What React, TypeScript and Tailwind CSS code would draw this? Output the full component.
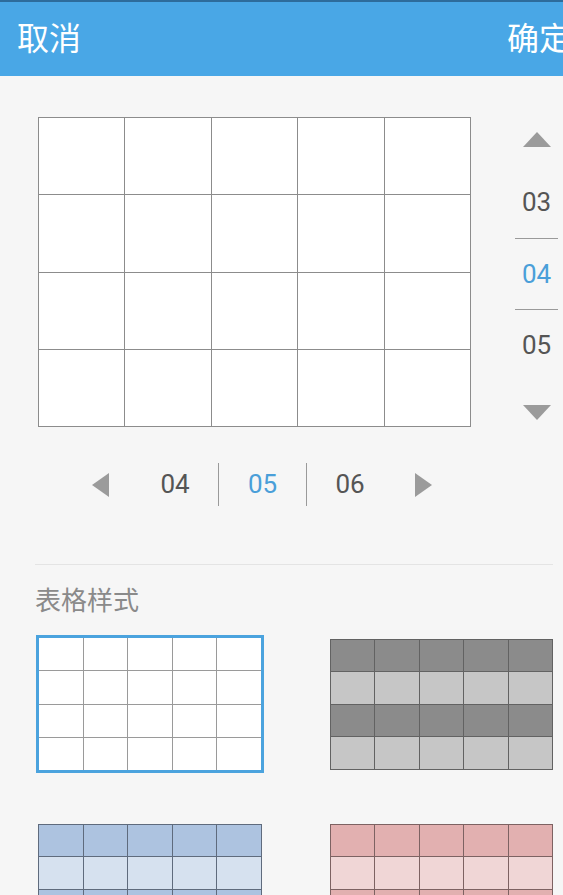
import React from "react";

const font = { fontFamily: 'Roboto, "Noto Sans CJK SC", sans-serif' };

function MiniGrid({
  lineClass,
  rowClasses,
  sizeClass,
  padded = true,
}: {
  lineClass: string;
  rowClasses: string[];
  sizeClass: string;
  padded?: boolean;
}) {
  const cells: React.ReactNode[] = [];
  rowClasses.forEach((rc, r) => {
    for (let c = 0; c < 5; c++) {
      cells.push(<div key={`${r}-${c}`} className={rc} />);
    }
  });
  return (
    <div
      className={`grid grid-cols-5 grid-rows-4 gap-px ${padded ? "p-px" : ""} ${lineClass} ${sizeClass}`}
    >
      {cells}
    </div>
  );
}

export default function App() {
  return (
    <div
      className="w-[563px] h-[895px] overflow-hidden bg-[#f6f6f6]"
      style={font}
    >
      <div className="w-[588px]">
        {/* Header */}
        <div className="h-[76px] bg-[#49a7e6] border-t-2 border-[#2d6c9c] flex items-center justify-between px-[17px] text-white text-[32px] leading-none">
          <span>取消</span>
          <span>确定</span>
        </div>

        {/* Main grid + vertical picker */}
        <div className="flex items-start pt-[41px] pl-[38px]">
          <MiniGrid
            lineClass="bg-[#8c8c8c]"
            rowClasses={["bg-white", "bg-white", "bg-white", "bg-white"]}
            sizeClass="w-[433px] h-[310px]"
          />
          <div className="ml-[44px] w-[43px] mt-[15px] flex flex-col items-center">
            <div className="w-0 h-0 border-l-[14px] border-r-[14px] border-b-[15px] border-l-transparent border-r-transparent border-b-[#9b9b9b]" />
            <div className="mt-[19px] w-full">
              <div className="h-[72px] flex items-center justify-center text-[26px] text-[#555]">
                03
              </div>
              <div className="h-px bg-[#9a9a9a]" />
              <div className="h-[70px] flex items-center justify-center text-[26px] text-[#4a9fd9]">
                04
              </div>
              <div className="h-px bg-[#9a9a9a]" />
              <div className="h-[70px] flex items-center justify-center text-[26px] text-[#555]">
                05
              </div>
            </div>
            <div className="mt-[25px] w-0 h-0 border-l-[14px] border-r-[14px] border-t-[15px] border-l-transparent border-r-transparent border-t-[#9b9b9b]" />
          </div>
        </div>

        {/* Horizontal picker */}
        <div className="flex items-center h-[43px] mt-[36px] pl-[92px]">
          <div className="w-0 h-0 border-t-[12px] border-b-[12px] border-r-[17px] border-t-transparent border-b-transparent border-r-[#9b9b9b]" />
          <div className="ml-[23px] w-[86px] flex justify-center text-[26px] text-[#555]">
            04
          </div>
          <div className="w-px h-[43px] bg-[#9a9a9a]" />
          <div className="w-[87px] flex justify-center text-[26px] text-[#4a9fd9]">
            05
          </div>
          <div className="w-px h-[43px] bg-[#9a9a9a]" />
          <div className="w-[86px] flex justify-center text-[26px] text-[#555]">
            06
          </div>
          <div className="ml-[22px] w-0 h-0 border-t-[12px] border-b-[12px] border-l-[17px] border-t-transparent border-b-transparent border-l-[#9b9b9b]" />
        </div>

        {/* Separator */}
        <div className="mt-[58px] ml-[35px] w-[518px] h-px bg-[#e4e4e4]" />

        {/* Title */}
        <div className="mt-[18px] pl-[35px] h-[36px] flex items-center text-[26px] text-[#8a8a8a]">
          表格样式
        </div>

        {/* Style cards */}
        <div className="mt-[16px] ml-[36px] grid grid-cols-[228px_223px] gap-x-[66px] gap-y-[47px]">
          <div className="h-[138px] flex items-center">
            <div className="border-[3px] border-[#4ba3de] w-[228px] h-[138px]">
              <MiniGrid
                lineClass="bg-[#9a9a9a]"
                rowClasses={["bg-white", "bg-white", "bg-white", "bg-white"]}
                sizeClass="w-full h-full"
                padded={false}
              />
            </div>
          </div>
          <div className="h-[138px] flex items-center">
            <MiniGrid
              lineClass="bg-[#626262]"
              rowClasses={[
                "bg-[#8b8b8b]",
                "bg-[#c6c6c6]",
                "bg-[#8b8b8b]",
                "bg-[#c6c6c6]",
              ]}
              sizeClass="w-[223px] h-[131px]"
            />
          </div>
          <div className="h-[138px] flex items-center justify-center">
            <MiniGrid
              lineClass="bg-[#5f6b7d]"
              rowClasses={[
                "bg-[#adc3e0]",
                "bg-[#d6e1ef]",
                "bg-[#adc3e0]",
                "bg-[#d6e1ef]",
              ]}
              sizeClass="w-[224px] h-[131px]"
            />
          </div>
          <div className="h-[138px] flex items-center">
            <MiniGrid
              lineClass="bg-[#7d6262]"
              rowClasses={[
                "bg-[#e2b0b0]",
                "bg-[#f0d6d6]",
                "bg-[#e2b0b0]",
                "bg-[#f0d6d6]",
              ]}
              sizeClass="w-[223px] h-[131px]"
            />
          </div>
        </div>
      </div>
    </div>
  );
}
